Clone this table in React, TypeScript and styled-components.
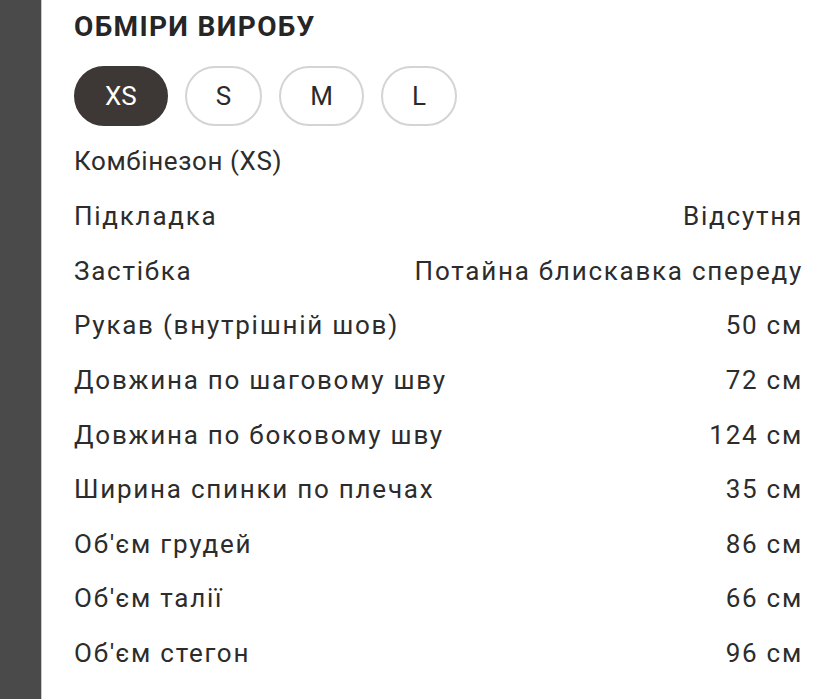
import React, { useState } from "react";
import styled, { createGlobalStyle } from "styled-components";

const GlobalStyle = createGlobalStyle`
  html, body {
    margin: 0;
    padding: 0;
    background: #ffffff;
  }
  body {
    font-family: Roboto, "Noto Sans", "Liberation Sans", sans-serif;
    color: #2c2c2c;
  }
`;

const sizes = ["XS", "S", "M", "L"];

const rows: [string, string][] = [
  ["Підкладка", "Відсутня"],
  ["Застібка", "Потайна блискавка спереду"],
  ["Рукав (внутрішній шов)", "50 см"],
  ["Довжина по шаговому шву", "72 см"],
  ["Довжина по боковому шву", "124 см"],
  ["Ширина спинки по плечах", "35 см"],
  ["Об'єм грудей", "86 см"],
  ["Об'єм талії", "66 см"],
  ["Об'єм стегон", "96 см"],
];

const App: React.FC = () => {
  const [active, setActive] = useState("XS");

  return (
    <Page>
      <GlobalStyle />
      <SideBar />
      <Content>
        <Title>ОБМІРИ ВИРОБУ</Title>
        <SizeRow>
          {sizes.map((s) => (
            <SizePill key={s} $active={s === active} onClick={() => setActive(s)}>
              {s}
            </SizePill>
          ))}
        </SizeRow>
        <Product>Комбінезон ({active})</Product>
        <Table>
          {rows.map(([label, value]) => (
            <Row key={label}>
              <Cell>{label}</Cell>
              <Cell>{value}</Cell>
            </Row>
          ))}
        </Table>
      </Content>
    </Page>
  );
};

export default App;

const Page = styled.div`
  display: flex;
  min-height: 699px;
  width: 835px;
`;

const SideBar = styled.div`
  width: 41px;
  flex-shrink: 0;
  background: #4a4a4a;
  border-right: 1px solid #c8c8c8;
`;

const Content = styled.div`
  flex: 1;
  display: flex;
  flex-direction: column;
  padding: 9px 32px 0 32px;
`;

const Title = styled.h2`
  margin: 0;
  font-size: 28px;
  font-weight: 700;
  letter-spacing: 1.35px;
  color: #262626;
  line-height: 36px;
`;

const SizeRow = styled.div`
  display: flex;
  gap: 17px;
  margin-top: 21px;
`;

const SizePill = styled.button<{ $active: boolean }>`
  height: 60px;
  padding: 0 29px;
  border-radius: 30px;
  border: 2px solid ${(p) => (p.$active ? "#3d3735" : "#d4d4d4")};
  background: ${(p) => (p.$active ? "#3d3735" : "#ffffff")};
  color: ${(p) => (p.$active ? "#ffffff" : "#2a2a2a")};
  font-family: Roboto, sans-serif;
  font-size: 26px;
  font-weight: 400;
  cursor: pointer;
`;

const Product = styled.div`
  margin-top: 15px;
  font-size: 26px;
  letter-spacing: 0.6px;
  line-height: 40px;
`;

const Table = styled.div`
  display: flex;
  flex-direction: column;
  margin-top: 8px;
`;

const Row = styled.div`
  display: flex;
  justify-content: space-between;
  align-items: center;
  height: 54.6px;
`;

const Cell = styled.span`
  font-size: 26px;
  letter-spacing: 1.75px;
`;
